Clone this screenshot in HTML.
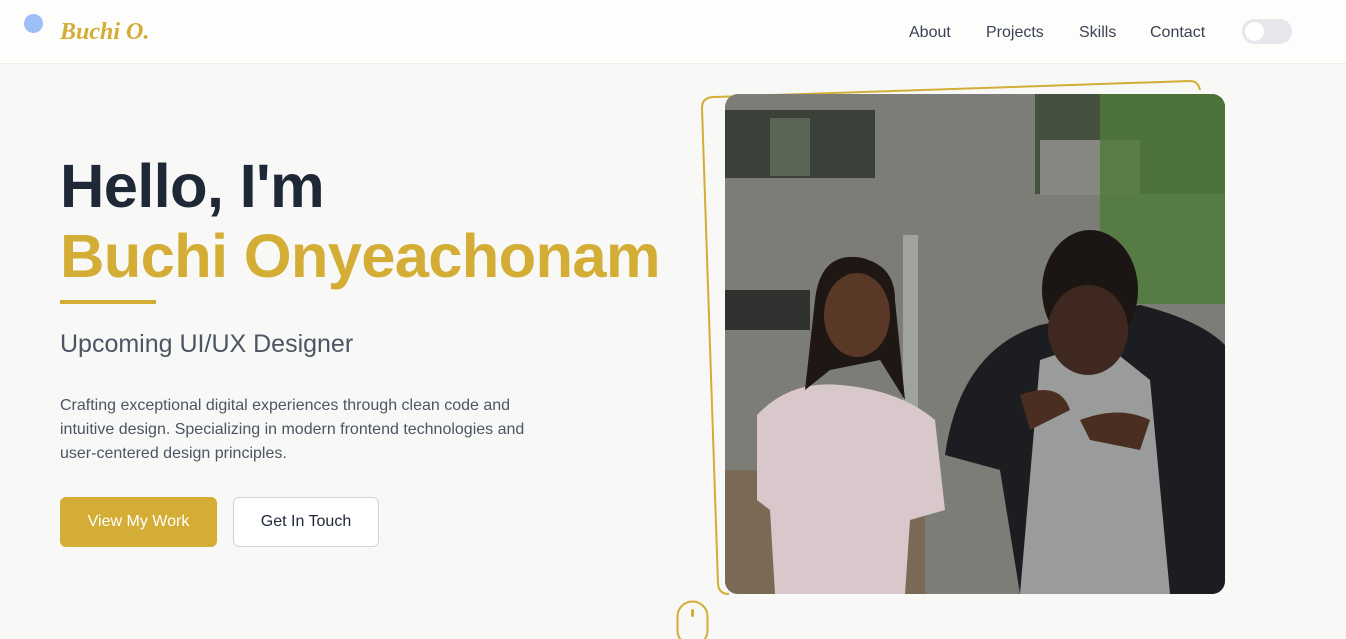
<!DOCTYPE html>
<html><head><meta charset="utf-8"><style>
*{margin:0;padding:0;box-sizing:border-box}
body{width:1346px;height:639px;overflow:hidden;background:#f8f9f6;font-family:"Liberation Sans",sans-serif;position:relative}
.nav{position:absolute;left:0;top:0;width:1346px;height:64px;background:#fdfdfc;border-bottom:1px solid #eceeea}
.dot{position:absolute;left:24px;top:14px;width:19px;height:19px;border-radius:50%;background:#9fbef8}
.logo{position:absolute;left:60px;top:19px;font:italic bold 24px "Liberation Serif",serif;color:#d4ad36}
.links{position:absolute;top:24px;font-size:16px;color:#3b4352}
.tog{position:absolute;left:1242px;top:19px;width:50px;height:25px;border-radius:13px;background:#e5e7eb}
.tog i{position:absolute;left:3px;top:3px;width:19px;height:19px;border-radius:50%;background:#fff}
h1{position:absolute;left:60px;font-weight:bold;font-size:61.5px;letter-spacing:-0.7px}
.btn{position:absolute;top:497px;height:50px;border-radius:6px;font-size:16px;display:flex;align-items:center;justify-content:center}
</style></head><body>
<div class="nav">
<div class="dot"></div><div class="logo">Buchi O.</div>
<span class="links" style="left:909px">About</span>
<span class="links" style="left:986px">Projects</span>
<span class="links" style="left:1079px">Skills</span>
<span class="links" style="left:1150px">Contact</span>
<div class="tog"><i></i></div>
</div>
<h1 style="top:151px;color:#1f2837">Hello, I'm</h1>
<h1 style="top:221px;color:#d4ad36">Buchi Onyeachonam</h1>
<div style="position:absolute;left:60px;top:300px;width:96px;height:4px;background:#d4ad36"></div>
<div style="position:absolute;left:60px;top:330px;font-size:25px;color:#4b5563">Upcoming UI/UX Designer</div>
<div style="position:absolute;left:60px;top:394px;width:505px;font-size:16px;line-height:24px;color:#4b5563">Crafting exceptional digital experiences through clean code and intuitive design. Specializing in modern frontend technologies and user-centered design principles.</div>
<div class="btn" style="left:60px;width:157px;background:#d4ad36;color:#fff">View My Work</div>
<div class="btn" style="left:233px;width:146px;border:1px solid #cfd3d8;background:#fff;color:#1f2837">Get In Touch</div>
<svg style="position:absolute;left:0;top:0" width="1346" height="639">
<path d="M714 97 L1190 81 Q1198 81 1200 90 M702 108 Q702 97 714 97 M702 108 L718 584 Q719 594 729 594" fill="none" stroke="#d4ad36" stroke-width="2"/>
<defs><clipPath id="c"><rect x="725" y="94" width="500" height="500" rx="13"/></clipPath></defs>
<g clip-path="url(#c)">
<rect x="725" y="94" width="500" height="500" fill="#7b7d76"/>
<rect x="725" y="110" width="150" height="68" fill="#3b4038"/>
<rect x="770" y="118" width="40" height="58" fill="#5a6555"/>
<rect x="725" y="290" width="85" height="40" fill="#2f322f"/>
<rect x="1035" y="94" width="190" height="100" fill="#46503e"/>
<rect x="1040" y="140" width="100" height="55" fill="#858780"/>
<rect x="1100" y="94" width="125" height="210" fill="#4f7a3a" opacity=".8"/>
<rect x="903" y="235" width="15" height="195" fill="#a0a29c"/>
<rect x="725" y="470" width="200" height="124" fill="#7a6a55"/>
<path d="M757 415 Q790 380 840 385 Q900 390 935 420 L945 510 L910 520 L905 594 L775 594 L770 510 L757 500Z" fill="#d8c8cc"/>
<ellipse cx="855" cy="305" rx="38" ry="48" fill="#4a2e22"/>
<path d="M815 300 Q820 255 855 257 Q895 262 895 300 L905 400 L880 360 L830 370 L805 390Z" fill="#1e1714"/>
<ellipse cx="857" cy="315" rx="33" ry="42" fill="#5a3828"/>
<path d="M945 455 Q960 350 1040 325 L1140 305 Q1200 320 1225 345 L1225 594 L1020 594 L1000 470Z" fill="#1c1d20"/>
<path d="M1040 360 L1100 340 L1150 380 L1170 594 L1020 594Z" fill="#9a9c9b"/>
<ellipse cx="1090" cy="290" rx="48" ry="60" fill="#1b1613"/>
<ellipse cx="1088" cy="330" rx="40" ry="45" fill="#3e281f"/>
<path d="M1020 395 Q1060 380 1070 410 L1030 430Z M1080 420 Q1120 405 1150 420 L1140 450 L1090 440Z" fill="#4a2e22"/>
</g>
<rect x="677.5" y="601.5" width="30" height="44" rx="15" fill="none" stroke="#d4ad36" stroke-width="2"/>
<rect x="691" y="609" width="3" height="8" rx="1.5" fill="#d4ad36"/>
</svg>
</body></html>
